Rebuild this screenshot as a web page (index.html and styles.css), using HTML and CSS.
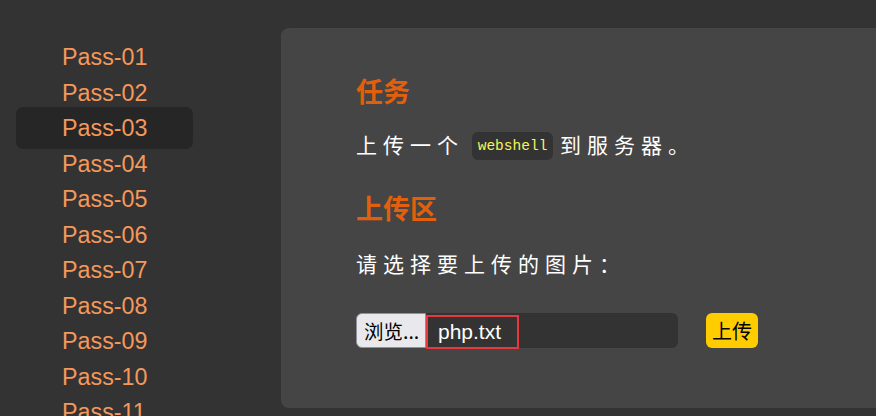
FILE: index.html
```html
<!DOCTYPE html>
<html lang="zh-CN">
<head>
    <meta charset="UTF-8">
    <meta name="viewport" content="width=device-width, initial-scale=1.0">
    <title>Pass-03</title>
    <link rel="stylesheet" href="styles.css">
</head>
<body>

    <div class="page">
        <ul class="menu">
            <li><a href="#">Pass-01</a></li>
            <li><a href="#">Pass-02</a></li>
            <li class="active"><a href="#">Pass-03</a></li>
            <li><a href="#">Pass-04</a></li>
            <li><a href="#">Pass-05</a></li>
            <li><a href="#">Pass-06</a></li>
            <li><a href="#">Pass-07</a></li>
            <li><a href="#">Pass-08</a></li>
            <li><a href="#">Pass-09</a></li>
            <li><a href="#">Pass-10</a></li>
            <li><a href="#">Pass-11</a></li>
        </ul>

        <div class="panel">
            <h2>任务</h2>
            <p class="text task">上传一个 <code>webshell</code> 到服务器。</p>

            <h2>上传区</h2>
            <p class="text">请选择要上传的图片：</p>

            <form class="upload" onsubmit="return false">
                <div class="file">
                    <span class="browse">浏览...</span>
                    <span class="filename">php.txt</span>
                </div>
                <button type="submit">上传</button>
            </form>
        </div>
    </div>

</body>
</html>
```

FILE: styles.css
```css
body {
    font-family: 'Liberation Sans', 'Noto Sans CJK SC', sans-serif;
    background-color: #333333;
    margin: 0;
    padding: 0;
    height: 100vh;
    overflow: hidden;
    color: #ffffff;
}

.page {
    display: flex;
    align-items: flex-start;
    padding-top: 28px;
}

.menu {
    list-style: none;
    margin: 0;
    padding: 12px 0 0 16px;
    width: 177px;
    flex-shrink: 0;
}

.menu li {
    display: flow-root;
    height: 35.5px;
    line-height: 35.5px;
    font-size: 23.3px;
}

.menu li a {
    display: block;
    padding-left: 46px;
    color: #f5985a;
    text-decoration: none;
}

.menu li.active a {
    background-color: #262626;
    border-radius: 7px;
    margin: -4px 0 -2px;
    padding-top: 4px;
    padding-bottom: 2px;
}

.panel {
    flex: 1;
    margin-left: 88px;
    margin-right: -20px;
    height: 380px;
    background-color: #454545;
    border-radius: 8px;
    padding: 45px 0 0 75px;
    box-sizing: border-box;
}

.panel h2 {
    font-family: 'Noto Sans CJK SC', sans-serif;
    font-size: 27px;
    line-height: 36px;
    color: #e35f0c;
    margin: 0;
}

.text {
    font-family: 'Noto Sans CJK SC', sans-serif;
    font-size: 21px;
    line-height: 32px;
    letter-spacing: 6px;
    margin: 21px 0 27px;
}

.text.task {
    margin: 19px 0 29px;
}

.text code {
    display: inline-block;
    font-family: 'Liberation Mono', monospace;
    font-size: 14.5px;
    font-weight: normal;
    line-height: 28px;
    letter-spacing: 0;
    color: #f5f55a;
    background-color: #333333;
    border-radius: 6px;
    padding: 0 6px;
    margin: 0 -4px 0 -3px;
    vertical-align: middle;
    position: relative;
    top: -1px;
}

.upload {
    display: flex;
    align-items: center;
    margin-top: 34px;
}

.file {
    display: flex;
    width: 322px;
    height: 35px;
    background-color: #333333;
    border-radius: 6px;
}

.browse {
    display: flex;
    align-items: center;
    padding: 0 4px 0 7px;
    background-color: #e9e9ed;
    color: #000000;
    border: 1px solid #8f8f9d;
    border-radius: 6px 0 0 6px;
    font-family: 'Noto Sans CJK SC', sans-serif;
    font-size: 19.5px;
    box-sizing: border-box;
    height: 35px;
    width: 70px;
}

.filename {
    display: flex;
    align-items: center;
    margin-top: 2px;
    height: 34px;
    width: 93px;
    padding-left: 10px;
    box-sizing: border-box;
    border: 2px solid #e8383d;
    font-size: 21px;
    color: #ffffff;
}

button {
    margin-left: 28px;
    height: 35px;
    padding: 0 6px;
    background-color: #ffcc00;
    color: #000000;
    border: none;
    border-radius: 6px;
    font-family: 'Noto Sans CJK SC', sans-serif;
    font-size: 20px;
    cursor: pointer;
}
```
